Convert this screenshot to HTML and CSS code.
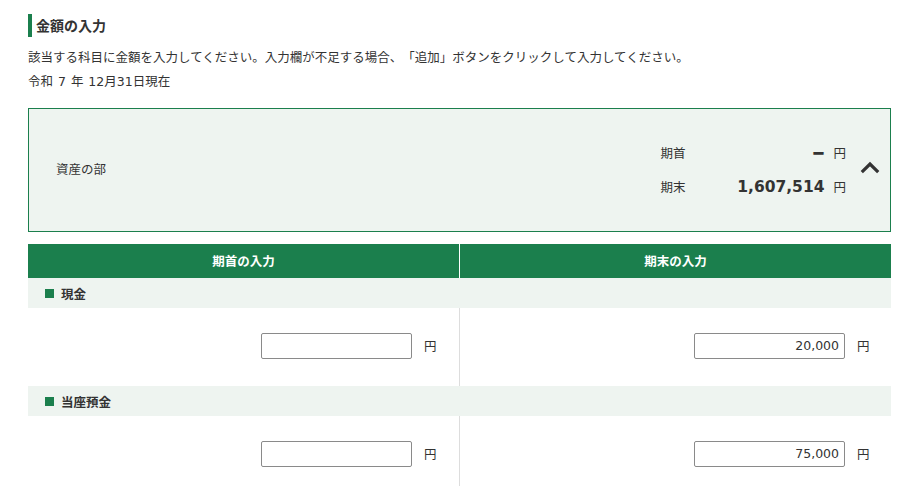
FILE: index.html
```html
<!DOCTYPE html>
<html lang="ja">
<head>
<meta charset="utf-8">
<title>金額の入力</title>
<link rel="stylesheet" href="styles.css">
</head>
<body>
<main class="page">
  <h2 class="title">金額の入力</h2>
  <p class="desc">該当する科目に金額を入力してください。入力欄が不足する場合、「追加」ボタンをクリックして入力してください。</p>
  <p class="date">令和 7 年 12月31日現在</p>

  <section class="summary">
    <div class="summary-label">資産の部</div>
    <div class="summary-values">
      <span class="sv-label">期首</span>
      <span class="sv-num"><span class="sv-dash">━</span></span>
      <span class="sv-unit">円</span>
      <span class="sv-label">期末</span>
      <span class="sv-num">1,607,514</span>
      <span class="sv-unit">円</span>
    </div>
    <button class="toggle" type="button" aria-label="閉じる">
      <svg width="20" height="13" viewBox="0 0 20 13"><path d="M1.8 11.2 L10 3 L18.2 11.2" fill="none" stroke="#333" stroke-width="3.2"/></svg>
    </button>
  </section>

  <div class="table">
    <div class="thead">
      <div class="th">期首の入力</div>
      <div class="th">期末の入力</div>
    </div>

    <div class="item-head"><span class="sq"></span>現金</div>
    <div class="item-row">
      <div class="cell"><input class="amount" type="text" value=""><span class="unit">円</span></div>
      <div class="cell cell-right"><input class="amount" type="text" value="20,000"><span class="unit">円</span></div>
    </div>

    <div class="item-head"><span class="sq"></span>当座預金</div>
    <div class="item-row">
      <div class="cell"><input class="amount" type="text" value=""><span class="unit">円</span></div>
      <div class="cell cell-right"><input class="amount" type="text" value="75,000"><span class="unit">円</span></div>
    </div>
  </div>
</main>
</body>
</html>
```

FILE: styles.css
```css
* { box-sizing: border-box; }

html, body {
  margin: 0;
  padding: 0;
  background: #fff;
}

body {
  font-family: "DejaVu Sans", "Noto Sans CJK JP", sans-serif;
  font-size: 12.5px;
  color: #333;
  overflow: hidden;
  text-spacing-trim: space-all;
}

.page {
  width: 863px;
  margin-left: 28px;
  padding-top: 14px;
}

.title {
  margin: 0;
  height: 23px;
  line-height: 23px;
  font-size: 14px;
  font-weight: bold;
  border-left: 4px solid #1b7f4d;
  padding-left: 4px;
  font-family: "Noto Sans CJK JP", sans-serif;
}

.desc {
  margin: 7px 0 0;
  line-height: 25px;
  font-family: "Noto Sans CJK JP", sans-serif;
}

.date {
  margin: 0;
  line-height: 25px;
  word-spacing: 1px;
}

.summary {
  margin-top: 14px;
  height: 124px;
  border: 1px solid #1b7f4d;
  background: #eef4f0;
  display: flex;
  align-items: center;
  padding: 0 10px 0 27px;
}

.summary-label {
  flex: 1;
  margin-bottom: 4px;
}

.summary-values {
  display: grid;
  grid-template-columns: 44px 111px auto;
  column-gap: 9px;
  row-gap: 8px;
  align-items: center;
}

.sv-label {
  line-height: 25px;
}

.sv-num {
  text-align: right;
  font-weight: bold;
  font-size: 15.5px;
  line-height: 25px;
}

.sv-dash {
  font-family: "DejaVu Sans", sans-serif;
  font-weight: bold;
  font-size: 16.5px;
  margin-right: 1px;
}

.sv-unit {
  line-height: 25px;
}

.toggle {
  margin: 0 0 6px 14px;
  padding: 0;
  border: 0;
  background: none;
  width: 20px;
  height: 13px;
  display: flex;
}

.table {
  margin-top: 12px;
}

.thead {
  display: grid;
  grid-template-columns: 431px 431px;
  column-gap: 1px;
  background: #fff;
}

.th {
  background: #1b7f4d;
  color: #fff;
  font-weight: bold;
  height: 34px;
  line-height: 34px;
  text-align: center;
  font-family: "Noto Sans CJK JP", sans-serif;
}

.item-head {
  background: #eef4f0;
  height: 30px;
  display: flex;
  align-items: center;
  padding-left: 17px;
  gap: 7px;
  font-weight: bold;
  font-family: "Noto Sans CJK JP", sans-serif;
}

.sq {
  width: 9px;
  height: 9px;
  background: #1b7f4d;
}

.item-row {
  display: grid;
  grid-template-columns: 431px 432px;
  height: 78px;
}

.cell {
  display: flex;
  align-items: center;
  justify-content: flex-end;
  padding: 0 22px 3px 0;
  gap: 12px;
}

.cell-right {
  border-left: 1px solid #ddd;
  padding-right: 21px;
}

.amount {
  width: 151px;
  height: 26px;
  border: 1px solid #8a8a8a;
  border-radius: 2px;
  font-family: "DejaVu Sans", sans-serif;
  font-size: 12.5px;
  color: #333;
  text-align: right;
  padding: 0 5px;
  margin: 0;
  background: #fff;
}

.unit {
  width: 13px;
}
```
